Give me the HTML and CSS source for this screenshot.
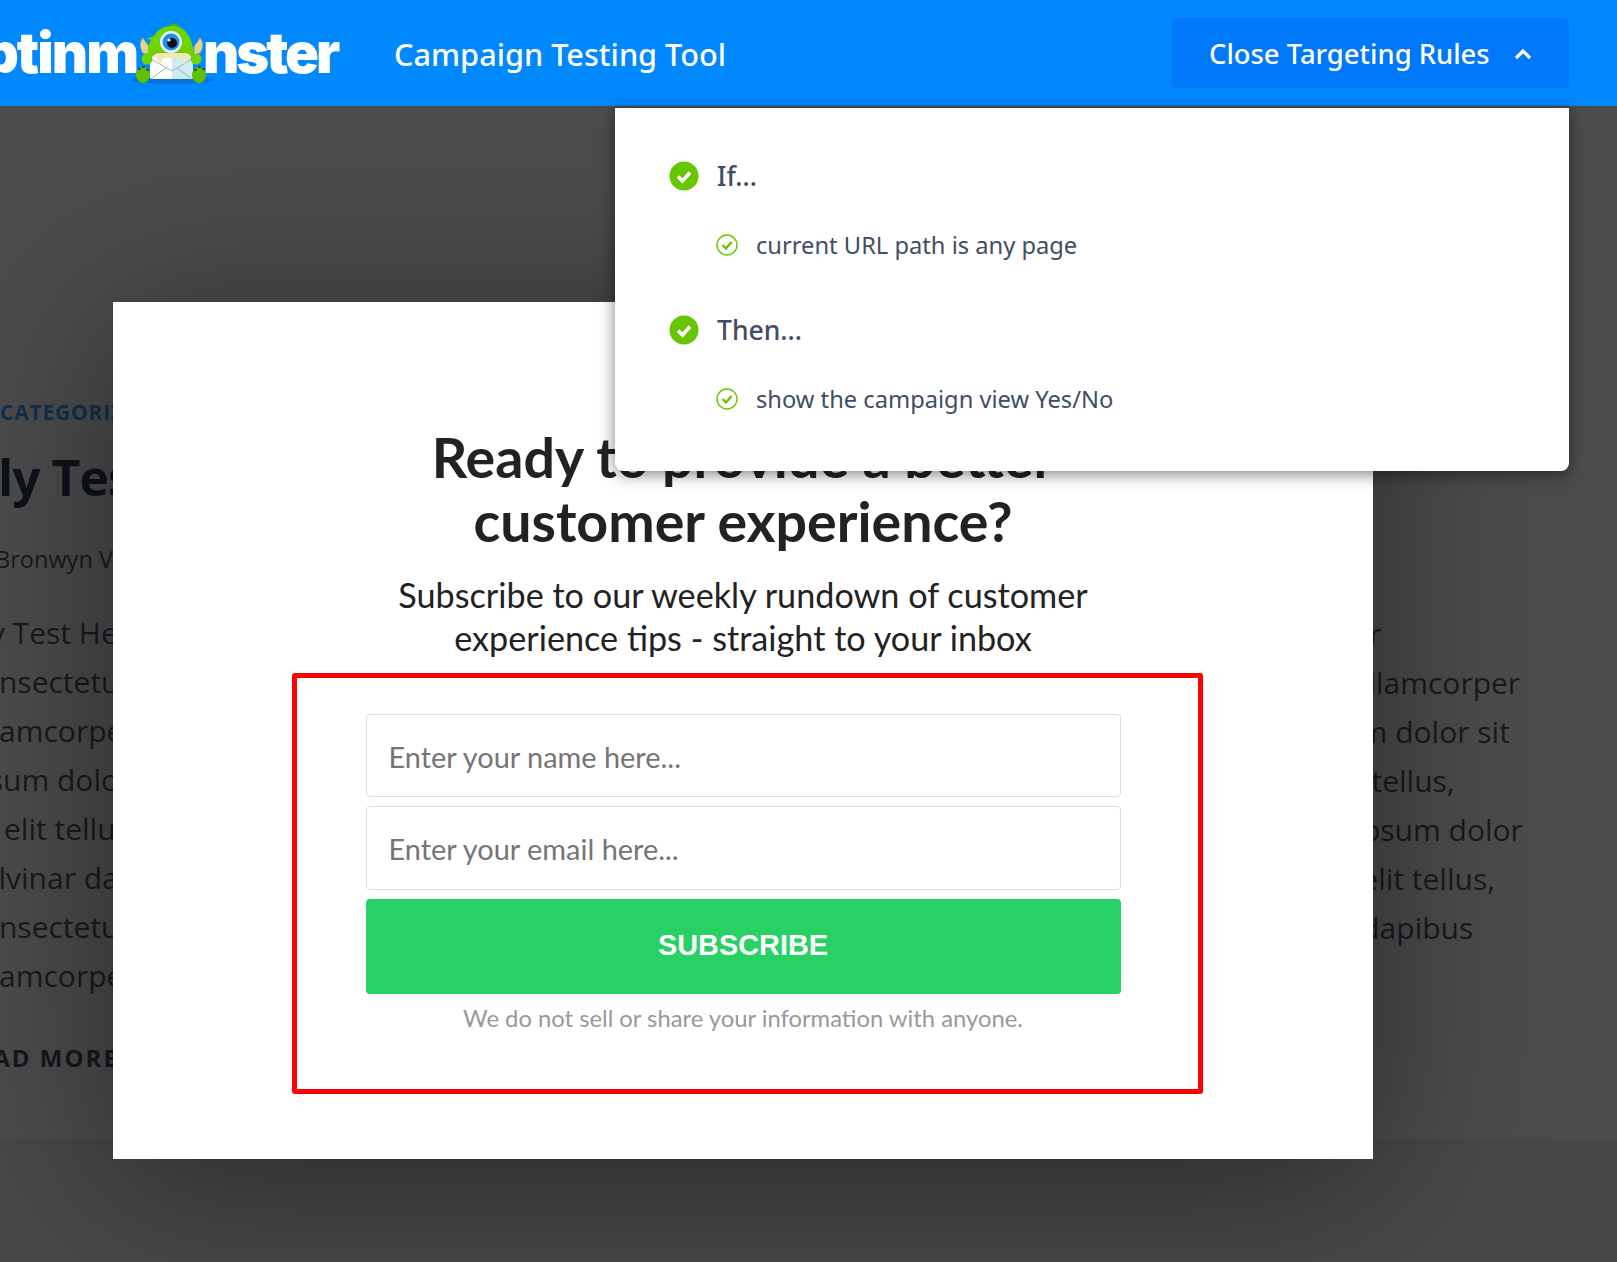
FILE: index.html
```html
<!DOCTYPE html>
<html lang="en">
<head>
    <meta charset="UTF-8" />
    <title>Campaign Testing Tool</title>
    <link rel="stylesheet" href="styles.css">
</head>
<body>

<header class="topbar">
    <div class="logo">
        <div class="logo-start"><span class="logo-word">optinm</span></div>
        <svg class="mascot" width="110" height="80" viewBox="0 0 110 80">
            <ellipse cx="62" cy="69" rx="41" ry="4" fill="#0a6fd6"/>
            <path d="M33 42 C29 36 30 30 33 27 C35 31 38 33 39 36 L39 44 Z" fill="#dcd69c" stroke="#a8a56a" stroke-width="1"/>
            <path d="M90 42 C94 36 93 30 90 27 C88 31 85 33 84 36 L84 44 Z" fill="#dcd69c" stroke="#a8a56a" stroke-width="1"/>
            <path d="M58 16 C61 11 67 11 71 18 C67 15 63 15 58 16 Z" fill="#58b000"/>
            <path d="M38 46 C37 38 39 33 41 29 L36 28 L44 25 C48 18 54 15 62 15 C74 15 83 24 84 46 Z" fill="#6fd400"/>
            <path d="M41 46 L46 42 L78 42 L82 46 L78 53 L74 48 L50 48 L46 53 Z" fill="#efe9b4" stroke="#8c8a50" stroke-width=".6"/>
            <path d="M40 46 H83 V66 Q83 68 81 68 H42 Q40 68 40 66 Z" fill="#fff"/>
            <path d="M62 46 H83 V66 Q83 68 81 68 H62 Z" fill="#cfe9f5"/>
            <path d="M41 48 L62 60 L82 48 M42 67 L56 57 M81 67 L67 57" fill="none" stroke="#9fb3bd" stroke-width="1"/>
            <path d="M46 46 L50 54 L53 47 L71 47 L74 54 L78 46 L76 42 H48 Z" fill="#efe9b4"/>
            <circle cx="61" cy="31" r="11" fill="#e8f6fd"/>
            <circle cx="61" cy="31" r="8.5" fill="#1b8fe6"/>
            <circle cx="62" cy="32" r="5" fill="#0b0f1c"/>
            <circle cx="59" cy="29" r="1.6" fill="#fff"/>
            <circle cx="37" cy="48" r="5.5" fill="#6fd400"/>
            <circle cx="86" cy="48" r="5.5" fill="#6fd400"/>
            <ellipse cx="33" cy="64" rx="7" ry="8" fill="#5fc000"/>
            <ellipse cx="89" cy="64" rx="7" ry="8" fill="#5fc000"/>
            <path d="M29 58 h1 M33 56 h1 M37 59 h1 M85 59 h1 M89 56 h1 M93 58 h1" stroke="#24520a" stroke-width="2" stroke-linecap="round"/>
        </svg>
        <span class="logo-word logo-word-end">nster</span>
    </div>
    <div class="tool-title">Campaign Testing Tool</div>
    <button class="rules-toggle">
        Close Targeting Rules
        <svg width="18" height="13" viewBox="0 0 18 13"><polyline points="2,11 9,4 16,11" fill="none" stroke="#fff" stroke-width="3.2"/></svg>
    </button>
</header>

<main class="article">
    <div class="article-left">
        <div class="category">CATEGORIZED</div>
        <div class="post-title">Early Test</div>
        <div class="byline">By Bronwyn Vale</div>
        <div class="post-text">
            <div class="first-line">Body Test Here</div>
            <div>Consectetur</div>
            <div>Ullamcorper</div>
            <div>Ipsum dolor</div>
            <div class="elit-line">elit tellus</div>
            <div>Pulvinar dapibus</div>
            <div>Consectetur</div>
            <div>Ullamcorper</div>
        </div>
        <div class="read-more">READ MORE</div>
    </div>
    <div class="article-right">
        <div>consectetur</div>
        <div>ullamcorper</div>
        <div>ipsum dolor sit</div>
        <div>elit tellus,</div>
        <div>Lorem ipsum dolor</div>
        <div>sit elit tellus,</div>
        <div>leo dapibus</div>
    </div>
</main>
<div class="page-foot"></div>

<section class="modal">
    <h1>Ready to provide a better<br>customer experience?</h1>
    <p class="modal-sub">Subscribe to our weekly rundown of customer<br>experience tips - straight to your inbox</p>
    <form class="signup">
        <input class="name" type="text" placeholder="Enter your name here...">
        <input class="email" type="text" placeholder="Enter your email here...">
        <button type="button" class="subscribe">SUBSCRIBE</button>
        <p class="privacy">We do not sell or share your information with anyone.</p>
    </form>
    <div class="highlight"></div>
</section>

<aside class="rules-panel">
    <div class="rule-head">
        <svg width="30" height="30" viewBox="0 0 30 30"><circle cx="15" cy="15" r="14.5" fill="#66c600"/><polyline points="9,15.5 13.5,20 21,11.5" fill="none" stroke="#fff" stroke-width="3.6"/></svg>
        If...
    </div>
    <div class="rule-item">
        <svg width="22" height="22" viewBox="0 0 22 22"><circle cx="11" cy="11" r="10" fill="none" stroke="#66c600" stroke-width="1.4"/><polyline points="6.5,11 10,14.5 15.5,8" fill="none" stroke="#66c600" stroke-width="2.4"/></svg>
        current URL path is any page
    </div>
    <div class="rule-head">
        <svg width="30" height="30" viewBox="0 0 30 30"><circle cx="15" cy="15" r="14.5" fill="#66c600"/><polyline points="9,15.5 13.5,20 21,11.5" fill="none" stroke="#fff" stroke-width="3.6"/></svg>
        Then...
    </div>
    <div class="rule-item">
        <svg width="22" height="22" viewBox="0 0 22 22"><circle cx="11" cy="11" r="10" fill="none" stroke="#66c600" stroke-width="1.4"/><polyline points="6.5,11 10,14.5 15.5,8" fill="none" stroke="#66c600" stroke-width="2.4"/></svg>
        show the campaign view Yes/No
    </div>
</aside>

</body>
</html>
```

FILE: styles.css
```css
html, body {
    height: 1262px;
    overflow: hidden;
}
body {
    margin: 0;
    position: relative;
    background: #4c4c4c;
    font-family: "Open Sans", "Noto Sans", sans-serif;
}
.topbar {
    height: 106px;
    background: #0088ff;
    display: flex;
    align-items: center;
    color: white;
}
.logo {
    display: flex;
    align-items: center;
    width: 394px;
    flex: none;
}
.logo-start {
    width: 137px;
    flex: none;
    display: flex;
    justify-content: flex-end;
}
.logo-word {
    font-family: Inter, sans-serif;
    font-weight: 900;
    font-size: 56px;
    letter-spacing: -2px;
    line-height: 106px;
}
.logo-word-end {
    margin-left: -17px;
    letter-spacing: -3px;
}
.mascot {
    flex: none;
    margin-left: -27px;
    margin-top: -4px;
    position: relative;
}
.tool-title {
    font-family: "Noto Sans", sans-serif;
    font-weight: 500;
    font-size: 30.7px;
    padding-top: 2px;
}
.rules-toggle {
    margin-left: auto;
    margin-right: 48px;
    width: 397px;
    height: 70px;
    padding: 0 37px;
    background: #0078fa;
    color: white;
    border: none;
    border-radius: 5px;
    font-family: "Noto Sans", sans-serif;
    font-weight: 500;
    font-size: 27.4px;
    display: flex;
    align-items: center;
    justify-content: space-between;
}
.article {
    height: 1032px;
    display: flex;
    color: #181a22;
    font-size: 30px;
}
.article-left {
    width: 151px;
    margin-left: -38px;
    padding-top: 289px;
    white-space: nowrap;
    flex: none;
}
.category {
    color: #12304f;
    font-weight: 700;
    font-size: 21px;
    letter-spacing: 0.8px;
    line-height: 34px;
    margin-left: 38px;
}
.post-title {
    color: #0e121a;
    font-weight: 700;
    font-size: 50px;
    letter-spacing: -1px;
    line-height: 68px;
    margin-top: 14px;
    margin-left: -42px;
}
.byline {
    font-size: 23.5px;
    line-height: 32px;
    margin-top: 32px;
}
.post-text {
    margin-top: 33px;
    line-height: 49px;
}
.first-line {
    margin-left: -28px;
}
.elit-line {
    margin-left: 42px;
}
.read-more {
    margin-top: 41px;
    font-weight: 700;
    font-size: 24px;
    letter-spacing: 2px;
    color: #151820;
    margin-left: -2px;
}
.article-right {
    margin-left: 1180px;
    padding-top: 503px;
    line-height: 49px;
    white-space: nowrap;
}
.article-right div:nth-child(1) { margin-left: -77px; }
.article-right div:nth-child(2) { margin-left: 57px; }
.article-right div:nth-child(3) { margin-left: 8px; }
.article-right div:nth-child(4) { margin-left: 28px; }
.article-right div:nth-child(5) { margin-left: -37px; }
.article-right div:nth-child(6) { margin-left: 28px; }
.article-right div:nth-child(7) { margin-left: 18px; }
.page-foot {
    height: 124px;
    background: #484848;
}
.modal {
    position: absolute;
    left: 113px;
    top: 302px;
    width: 1260px;
    height: 857px;
    box-sizing: border-box;
    padding-top: 123px;
    background: white;
    text-align: center;
    font-family: Lato, "Open Sans", sans-serif;
    box-shadow: 0 20px 160px rgba(0, 0, 0, 0.45);
}
.modal h1 {
    margin: 0;
    font-weight: 700;
    font-size: 55.5px;
    line-height: 64px;
    color: #222;
}
.modal-sub {
    margin: 20px 0 55px;
    font-size: 34.2px;
    line-height: 43px;
    color: #222;
}
.signup {
    width: 755px;
    margin: 0 auto;
    display: flex;
    flex-direction: column;
    gap: 9px;
}
.signup input {
    height: 83px;
    box-sizing: border-box;
    padding: 0 22px;
    border: 1px solid #ddd;
    border-radius: 4px;
    font-family: Lato, "Open Sans", sans-serif;
    font-size: 28.9px;
}
.signup input::placeholder {
    color: #757575;
    opacity: 1;
}
.signup .name {
    padding-top: 2px;
}
.signup .email {
    height: 84px;
}
.subscribe {
    height: 95px;
    padding: 0 0 3px;
    background: #27d163;
    color: white;
    border: none;
    border-radius: 4px;
    font-family: "Liberation Sans", Arial, sans-serif;
    font-weight: 700;
    font-size: 28.9px;
}
.privacy {
    margin: 0;
    font-size: 23.8px;
    line-height: 30px;
    color: #999;
}
.highlight {
    position: absolute;
    left: 179px;
    top: 371px;
    width: 901px;
    height: 411px;
    border: 5px solid #ff0000;
    border-radius: 3px;
}
.rules-panel {
    position: absolute;
    left: 615px;
    top: 108px;
    width: 954px;
    height: 363px;
    box-sizing: border-box;
    padding: 53px 0 0 54px;
    background: white;
    border-radius: 0 0 8px 8px;
    box-shadow: 0 3px 16px rgba(0, 0, 0, 0.5);
    color: #3f4d65;
    font-family: "Noto Sans", sans-serif;
}
.rule-head {
    display: flex;
    align-items: center;
    gap: 18px;
    height: 30px;
    font-size: 26.5px;
    font-weight: 500;
}
.rule-item {
    display: flex;
    align-items: center;
    gap: 18px;
    height: 30px;
    margin: 39px 0 55px 47px;
    font-size: 23.7px;
}
```
